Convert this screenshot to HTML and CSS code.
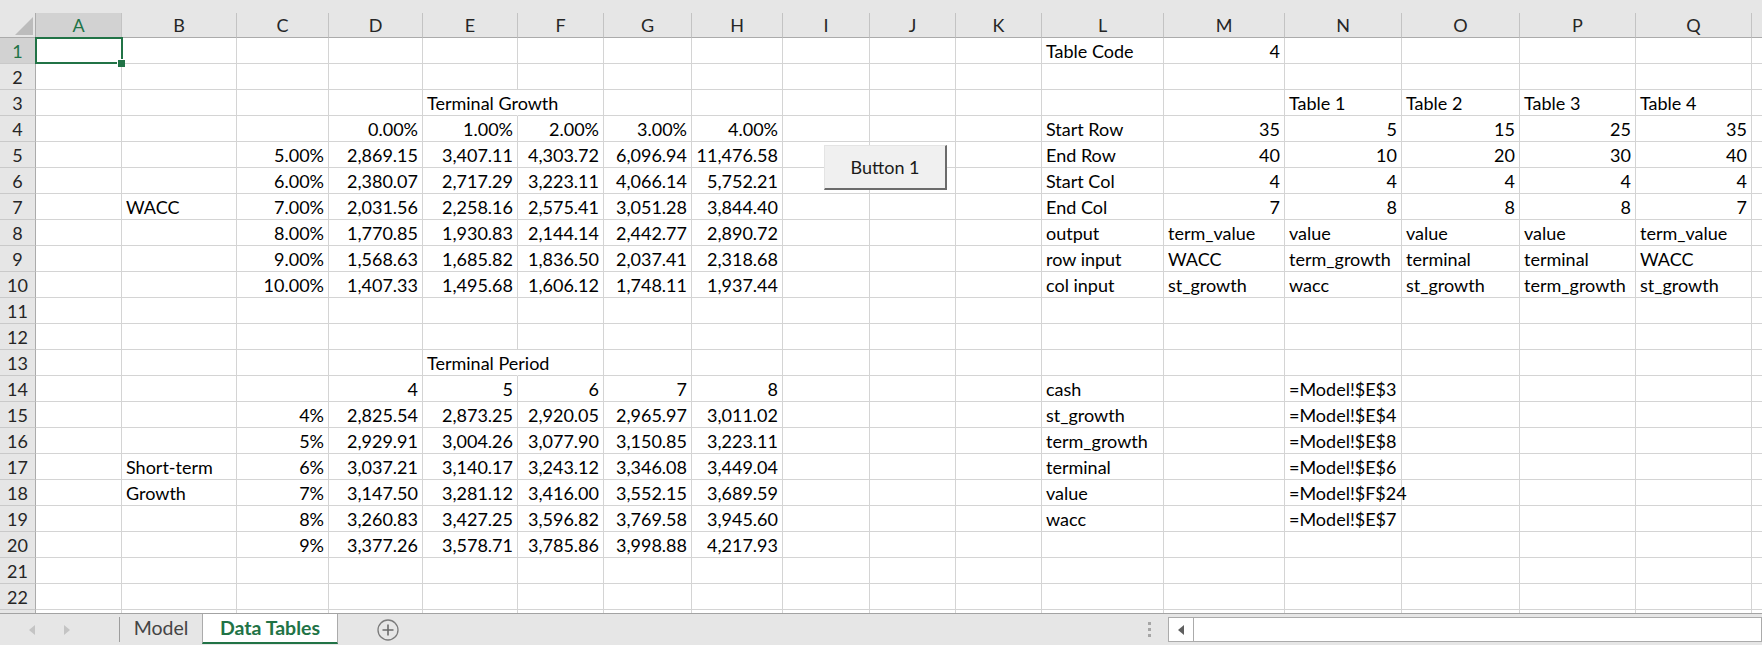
FILE: index.html
```html
<!DOCTYPE html>
<html lang="en">
<head>
  <meta charset="UTF-8" />
  <title>Data Tables</title>
  <link rel="stylesheet" href="styles.css">
</head>
<body>
  <div class="workbook">
    <div class="sheet">
      <div class="header-strip"></div>
      <div class="grid" id="grid"></div>
      <button type="button" class="form-button">Button 1</button>
    </div>

    <div class="tab-bar">
      <div class="tab-nav">
        <svg width="6" height="10" viewBox="0 0 6 10"><polygon points="6,0 6,10 0,5" fill="#c4c4c4"/></svg>
        <svg width="6" height="10" viewBox="0 0 6 10"><polygon points="0,0 0,10 6,5" fill="#c4c4c4"/></svg>
      </div>
      <div class="tab-sep"></div>
      <div class="tab">Model</div>
      <div class="tab active">Data Tables</div>
      <div class="add-sheet">
        <svg width="22" height="22" viewBox="0 0 22 22">
          <circle cx="11" cy="11" r="10" fill="none" stroke="#7b7b7b" stroke-width="1.3"/>
          <path d="M11 5.5v11M5.5 11h11" stroke="#6b6b6b" stroke-width="1.6"/>
        </svg>
      </div>
      <div class="splitter"><span></span><span></span><span></span></div>
      <div class="hscroll">
        <div class="hscroll-btn">
          <svg width="6" height="10" viewBox="0 0 6 10"><polygon points="6,0 6,10 0,5" fill="#5f5f5f"/></svg>
        </div>
      </div>
    </div>
  </div>

  <script>
    // R and row 23 only peek in at the window edges, so they get no label
    const COLS = "ABCDEFGHIJKLMNOPQR".split("");
    const ROWS = 23;
    const LAST_LABELED_COL = "Q";
    const LAST_LABELED_ROW = 22;

    const cells = {
      1: { L: "Table Code", M: "4" },
      3: { E: "Terminal Growth", N: "Table 1", O: "Table 2", P: "Table 3", Q: "Table 4" },
      4: { D: "0.00%", E: "1.00%", F: "2.00%", G: "3.00%", H: "4.00%", L: "Start Row", M: "35", N: "5", O: "15", P: "25", Q: "35" },
      5: { C: "5.00%", D: "2,869.15", E: "3,407.11", F: "4,303.72", G: "6,096.94", H: "11,476.58", L: "End Row", M: "40", N: "10", O: "20", P: "30", Q: "40" },
      6: { C: "6.00%", D: "2,380.07", E: "2,717.29", F: "3,223.11", G: "4,066.14", H: "5,752.21", L: "Start Col", M: "4", N: "4", O: "4", P: "4", Q: "4" },
      7: { B: "WACC", C: "7.00%", D: "2,031.56", E: "2,258.16", F: "2,575.41", G: "3,051.28", H: "3,844.40", L: "End Col", M: "7", N: "8", O: "8", P: "8", Q: "7" },
      8: { C: "8.00%", D: "1,770.85", E: "1,930.83", F: "2,144.14", G: "2,442.77", H: "2,890.72", L: "output", M: "term_value", N: "value", O: "value", P: "value", Q: "term_value" },
      9: { C: "9.00%", D: "1,568.63", E: "1,685.82", F: "1,836.50", G: "2,037.41", H: "2,318.68", L: "row input", M: "WACC", N: "term_growth", O: "terminal", P: "terminal", Q: "WACC" },
      10: { C: "10.00%", D: "1,407.33", E: "1,495.68", F: "1,606.12", G: "1,748.11", H: "1,937.44", L: "col input", M: "st_growth", N: "wacc", O: "st_growth", P: "term_growth", Q: "st_growth" },
      13: { E: "Terminal Period" },
      14: { D: "4", E: "5", F: "6", G: "7", H: "8", L: "cash", N: "=Model!$E$3" },
      15: { C: "4%", D: "2,825.54", E: "2,873.25", F: "2,920.05", G: "2,965.97", H: "3,011.02", L: "st_growth", N: "=Model!$E$4" },
      16: { C: "5%", D: "2,929.91", E: "3,004.26", F: "3,077.90", G: "3,150.85", H: "3,223.11", L: "term_growth", N: "=Model!$E$8" },
      17: { B: "Short-term", C: "6%", D: "3,037.21", E: "3,140.17", F: "3,243.12", G: "3,346.08", H: "3,449.04", L: "terminal", N: "=Model!$E$6" },
      18: { B: "Growth", C: "7%", D: "3,147.50", E: "3,281.12", F: "3,416.00", G: "3,552.15", H: "3,689.59", L: "value", N: "=Model!$F$24" },
      19: { C: "8%", D: "3,260.83", E: "3,427.25", F: "3,596.82", G: "3,769.58", H: "3,945.60", L: "wacc", N: "=Model!$E$7" },
      20: { C: "9%", D: "3,377.26", E: "3,578.71", F: "3,785.86", G: "3,998.88", H: "4,217.93" }
    };

    // labels too long for their cell run over the next gridline
    const spill = ["E3", "E13"];

    const grid = document.getElementById("grid");

    function add(cls, text) {
      const el = document.createElement("div");
      el.className = cls;
      if (text) el.textContent = text;
      grid.appendChild(el);
      return el;
    }

    add("corner").innerHTML =
      '<svg width="35" height="24" viewBox="0 0 35 24"><polygon points="33,4 33,22 15,22" fill="#bcbcbc"/></svg>';

    COLS.forEach(c => add("col-head" + (c === "A" ? " active" : ""), c <= LAST_LABELED_COL ? c : ""));

    for (let r = 1; r <= ROWS; r++) {
      add("row-head" + (r === 1 ? " active" : ""), r <= LAST_LABELED_ROW ? String(r) : "");
      COLS.forEach(c => {
        const value = (cells[r] || {})[c] || "";
        let cls = "cell";
        if (/^[\d.,%]+$/.test(value)) cls += " num";
        if (spill.includes(c + r)) cls += " spill";
        if (c + r === "A1") cls += " current";
        add(cls, value);
      });
    }
  </script>
</body>
</html>
```

FILE: styles.css
```css
* {
  box-sizing: border-box;
}

body {
  margin: 0;
  overflow: hidden;
  font-family: Lato, "Open Sans", sans-serif;
  background: #e6e6e6;
  color: #000;
}

.workbook {
  width: 1762px;
  height: 645px;
  display: flex;
  flex-direction: column;
}

/* ---- sheet area ---- */

.sheet {
  position: relative;
  height: 613px;
  overflow: hidden;
  background: #fff;
}

.header-strip {
  height: 13px;
  background: #e6e6e6;
}

.grid {
  display: grid;
  grid-template-columns: 36px 86px 115px 92px 94px 95px 86px 88px 91px 87px 86px 86px 122px 121px 117px 118px 116px 116px 116px;
  grid-template-rows: 25px;
  grid-auto-rows: 26px;
  font-size: 18px;
}

.grid > div {
  display: flex;
  align-items: flex-end;
  white-space: nowrap;
  line-height: 20px;
  padding: 0 4px 2px;
}

.grid > .corner {
  padding: 0;
  background: #e6e6e6;
  border-right: 1px solid #ababab;
  border-bottom: 1px solid #ababab;
}

.corner svg {
  display: block;
}

.col-head {
  justify-content: center;
  background: #e6e6e6;
  color: #262626;
  border-right: 1px solid #c3c3c3;
  border-bottom: 1px solid #ababab;
}

.row-head {
  justify-content: center;
  background: #e6e6e6;
  color: #262626;
  border-right: 1px solid #ababab;
  border-bottom: 1px solid #c9c9c9;
}

.col-head.active,
.row-head.active {
  background: #d2d2d2;
  color: #217346;
}

.cell {
  border-right: 1px solid #d4d4d4;
  border-bottom: 1px solid #d4d4d4;
}

.cell.num {
  justify-content: flex-end;
}

.cell.spill {
  border-right-color: transparent;
}

/* selected cell frame and fill handle */
.cell.current {
  position: relative;
  z-index: 1;
}

.cell.current::before {
  content: "";
  position: absolute;
  left: -1px;
  top: -1px;
  right: -2px;
  bottom: -1px;
  border: 2px solid #217346;
}

.cell.current::after {
  content: "";
  position: absolute;
  right: -4px;
  bottom: -4px;
  width: 7px;
  height: 7px;
  background: #217346;
  border-left: 1px solid #fff;
  border-top: 1px solid #fff;
}

.form-button {
  position: absolute;
  left: 824px;
  top: 145px;
  width: 123px;
  height: 45px;
  padding: 0;
  background: #f0f0f0;
  border: 1px solid #e4e4e4;
  border-right: 2px solid #6b6b6b;
  border-bottom: 2px solid #6b6b6b;
  font-family: Lato, "Open Sans", sans-serif;
  font-size: 18px;
  color: #1a1a1a;
}

/* ---- sheet tabs and scrollbar ---- */

.tab-bar {
  height: 32px;
  display: flex;
  align-items: center;
  border-top: 1px solid #a3a3a3;
  background: #e6e6e6;
}

.tab-nav {
  width: 119px;
  display: flex;
  align-items: center;
}

.tab-nav svg {
  display: block;
  margin-left: 29px;
}

.tab-sep {
  width: 1px;
  height: 25px;
  background: #9d9d9d;
}

.tab {
  align-self: flex-start;
  height: 30px;
  width: 82px;
  display: flex;
  align-items: center;
  justify-content: center;
  padding-bottom: 2px;
  border-bottom: 2px solid transparent;
  font-size: 19.5px;
  color: #444;
}

.tab.active {
  width: 136px;
  background: #fff;
  border-left: 1px solid #ababab;
  border-right: 1px solid #ababab;
  border-bottom-color: #217346;
  font-weight: bold;
  color: #217346;
}

.add-sheet {
  margin-left: 39px;
  height: 22px;
}

.add-sheet svg {
  display: block;
}

.splitter {
  margin-left: auto;
  margin-right: 17px;
  display: flex;
  flex-direction: column;
  gap: 3px;
}

.splitter span {
  width: 3px;
  height: 3px;
  background: #a6a6a6;
}

.hscroll {
  width: 594px;
  height: 25px;
  display: flex;
  background: #fff;
  border: 1px solid #ababab;
}

.hscroll-btn {
  width: 25px;
  display: flex;
  align-items: center;
  justify-content: center;
  border-right: 1px solid #ababab;
}
```
